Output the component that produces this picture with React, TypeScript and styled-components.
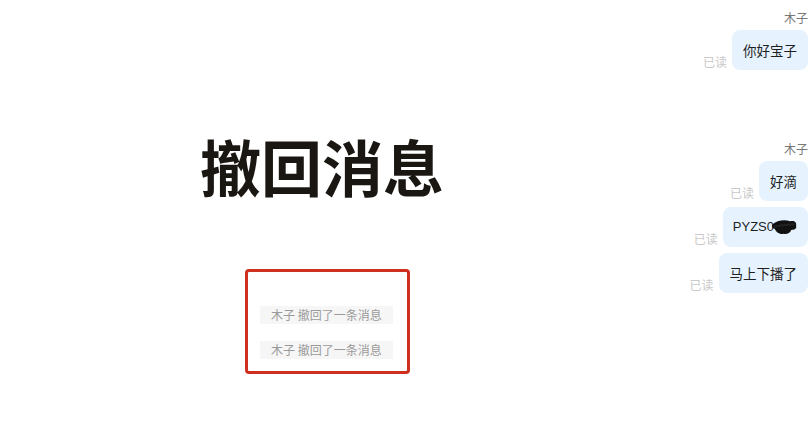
import React from 'react';
import styled, { createGlobalStyle } from 'styled-components';

const GlobalStyle = createGlobalStyle`
  html, body {
    margin: 0;
    padding: 0;
    background: #ffffff;
  }
  body {
    font-family: "Noto Sans CJK SC", "Noto Sans", sans-serif;
  }
`;

const Page = styled.div`
  display: flex;
  width: 811px;
  height: 437px;
  overflow: hidden;
  background: #ffffff;
`;

const Stage = styled.main`
  flex: 1;
  display: flex;
  flex-direction: column;
  align-items: flex-start;
  padding: 135px 0 0 200px;
`;

const Title = styled.h1`
  margin: 0;
  font-family: "Noto Sans CJK SC", sans-serif;
  font-size: 61px;
  line-height: 1;
  font-weight: 700;
  color: #1a1612;
  letter-spacing: 0;
`;

const RecallBox = styled.section`
  box-sizing: border-box;
  width: 165px;
  height: 105px;
  margin: 73px 0 0 45px;
  padding: 34px 12px 0;
  border: 3px solid #cf2f1f;
  border-radius: 4px;
  display: flex;
  flex-direction: column;
  align-items: flex-start;
  gap: 17px;
`;

const RecallNotice = styled.div`
  height: 18px;
  line-height: 18px;
  padding: 0 11px;
  background: #f6f6f6;
  color: #9a9a9a;
  font-size: 12px;
  white-space: nowrap;
`;

const ChatColumn = styled.aside`
  display: flex;
  flex-direction: column;
  align-items: flex-end;
  padding: 11px 3px 0 0;
`;

const Group = styled.div<{ $gapTop?: number }>`
  display: flex;
  flex-direction: column;
  align-items: flex-end;
  gap: 6px;
  margin-top: ${(p) => p.$gapTop ?? 0}px;
`;

const Name = styled.div`
  font-size: 12px;
  line-height: 14px;
  color: #777;
  margin-bottom: -1px;
`;

const Row = styled.div`
  display: flex;
  align-items: flex-end;
  gap: 5px;
`;

const ReadMark = styled.span`
  font-size: 12px;
  line-height: 14px;
  color: #c9c9c9;
  margin-bottom: 1px;
`;

const Bubble = styled.div<{ $pad?: number }>`
  height: 40px;
  line-height: 40px;
  padding: 0 ${(p) => p.$pad ?? 11}px;
  border-radius: 8px;
  background: #e6f3ff;
  color: #1f1f1f;
  font-size: 13.5px;
  white-space: nowrap;
  display: flex;
  align-items: center;
`;

const Latin = styled.span`
  font-family: "Liberation Sans", "Noto Sans", sans-serif;
  font-size: 13px;
`;

const Scribble = () => (
  <svg width="27" height="18" viewBox="0 0 28 18" style={{ marginLeft: -3 }}>
    <path
      d="M2 6 C6 2, 14 1, 20 3 C24 2, 27 4, 26 8 C27 11, 24 12, 21 12 C20 15, 16 17, 13 16 C9 17, 5 14, 4 11 C1 10, 0 8, 2 6 Z"
      fill="#111"
    />
    <path d="M3 9 C8 7, 16 7, 25 6" stroke="#222" strokeWidth="2" fill="none" />
  </svg>
);

const App: React.FC = () => {
  return (
    <>
      <GlobalStyle />
      <Page>
        <Stage>
          <Title>撤回消息</Title>
          <RecallBox>
            <RecallNotice>木子 撤回了一条消息</RecallNotice>
            <RecallNotice>木子 撤回了一条消息</RecallNotice>
          </RecallBox>
        </Stage>
        <ChatColumn>
          <Group>
            <Name>木子</Name>
            <Row>
              <ReadMark>已读</ReadMark>
              <Bubble>你好宝子</Bubble>
            </Row>
          </Group>
          <Group $gapTop={72}>
            <Name>木子</Name>
            <Row>
              <ReadMark>已读</ReadMark>
              <Bubble>好滴</Bubble>
            </Row>
            <Row>
              <ReadMark>已读</ReadMark>
              <Bubble $pad={10}>
                <Latin>PYZS0</Latin>
                <Scribble />
              </Bubble>
            </Row>
            <Row>
              <ReadMark>已读</ReadMark>
              <Bubble>马上下播了</Bubble>
            </Row>
          </Group>
        </ChatColumn>
      </Page>
    </>
  );
};

export default App;
